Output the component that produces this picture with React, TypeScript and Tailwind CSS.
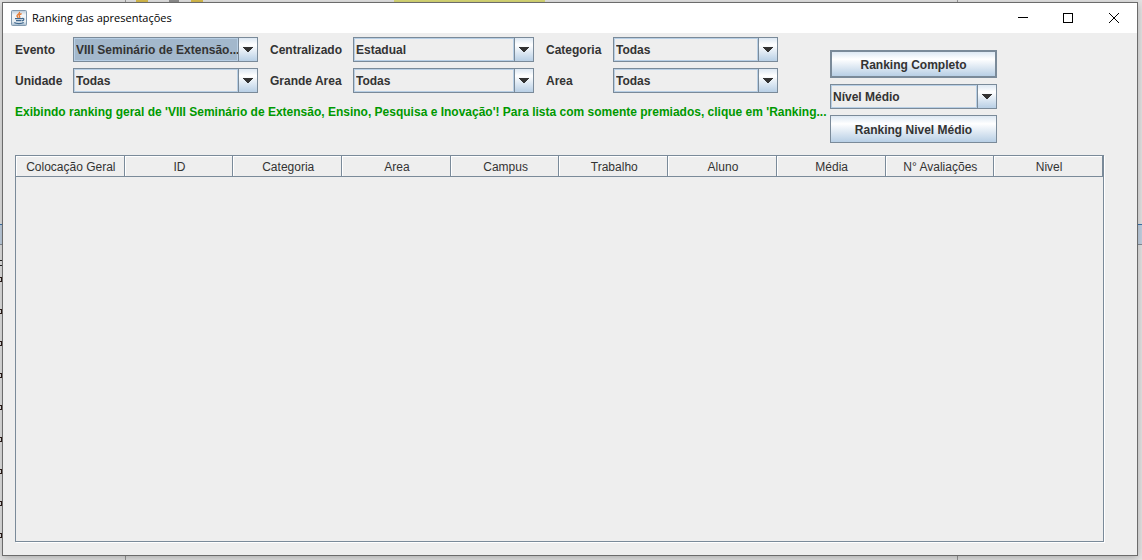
import React, { useId } from 'react';

type ComboProps = { options: string[]; label?: string; name: string; selected?: boolean };

function Combo({ id, options, name, labelled, selected }: { id: string; options: string[]; name: string; labelled: boolean; selected?: boolean }) {
  return (
    <div className="relative flex h-[25px] min-w-0 border border-[#7a8a99] bg-gradient-to-b from-[#dde8f3] via-white via-30% to-[#b8cfe5]">
      <select
        id={id}
        aria-label={labelled ? undefined : name}
        className="relative z-10 w-full min-w-0 appearance-none overflow-hidden rounded-none bg-transparent pl-[2px] text-xs font-bold whitespace-nowrap text-[#333333] outline-none"
      >
        {options.map((o) => (
          <option key={o}>{o}</option>
        ))}
      </select>
      <span
        aria-hidden="true"
        className={
          selected
            ? 'pointer-events-none absolute inset-y-0 left-0 right-[19px] border border-[#b8cfe5] bg-[#a3b8cc]'
            : 'pointer-events-none absolute inset-y-0 left-0 right-[19px] border border-[#b8cfe5] bg-[#eeeeee]'
        }
      />
      <span
        aria-hidden="true"
        className="pointer-events-none absolute inset-y-0 right-0 z-20 flex w-[19px] items-center justify-center border-l border-[#7a8a99] bg-gradient-to-b from-[#dde8f3] via-white via-30% to-[#b8cfe5]"
      >
        <svg width="10" height="5" viewBox="0 0 10 5" shapeRendering="crispEdges" fill="#333333">
          <path d="M0 0h10v1H0zM1 1h8v1H1zM2 2h6v1H2zM3 3h4v1H3zM4 4h2v1H4z" />
        </svg>
      </span>
    </div>
  );
}

function Field({ label, name, options, selected }: ComboProps) {
  const id = useId();
  return (
    <>
      {label && (
        <label htmlFor={id} className="whitespace-nowrap">
          {label}
        </label>
      )}
      <Combo id={id} options={options} name={name} labelled={!!label} selected={selected} />
    </>
  );
}

function JavaIcon() {
  return (
    <svg width="16" height="16" viewBox="0 0 16 16" aria-hidden="true">
      <defs>
        <linearGradient id="tile" x1="0" y1="0" x2="0" y2="1">
          <stop offset="0" stopColor="#b9c8d6" />
          <stop offset="0.3" stopColor="#f4f7f9" />
          <stop offset="0.75" stopColor="#e6edf2" />
          <stop offset="1" stopColor="#9fb6ca" />
        </linearGradient>
      </defs>
      <rect x="0.5" y="0.5" width="15" height="15" rx="1" fill="url(#tile)" stroke="#8199ae" />
      <path d="M8.400 1.800C9.600 3.700 5.200 4.600 6 6.300c.3.700.9 1 1.300 1.500M10.600 3.600C8 4.600 7.500 5.400 8.600 6.400c.5.500.2 1-.3 1.400" fill="none" stroke="#e4762b" strokeWidth="1.300" />
      <path d="M4 8.700h7M11 8.600c2.500-.7 2.500 1.700 0 2.300M5 10.600h5.500M3.300 12.600c1.800 1.300 7.400 1.300 9.400 0" fill="none" stroke="#41698f" strokeWidth="1.200" />
    </svg>
  );
}

function Backdrop() {
  return (
    <div aria-hidden="true" className="absolute inset-0 overflow-hidden bg-[#e4e4e4]">
      <svg className="absolute left-0 top-0 h-full w-full" shapeRendering="crispEdges">
        <path d="M125 0h1v560h-1zM957 0h1v560h-1z" fill="#999999" />
        <path d="M136 0h12v2h-12zM191 0h12v2h-12z" fill="#d9bd4c" />
        <path d="M169 0h10v2h-10z" fill="#909090" />
        <path d="M394 0h151v2H394z" fill="#dada76" />
        <path d="M0 225h1142v20H0z" fill="#c3d2e3" />
        <path d="M0 224h1142v1H0z" fill="#3b74ac" />
        <path d="M0 244h1142v1H0z" fill="#868d97" />
        <path d="M0 260h2v1H0zM0 265h2v1H0z" fill="#222" />
        {[277, 309, 341, 373, 405, 437, 469, 501, 533].map((y) => (
          <path key={y} d={`M0 ${y}h2v1H0zM0 ${y + 4}h2v1H0zM1 ${y + 1}h1v3h-1z`} fill="#2b1a16" />
        ))}
      </svg>
    </div>
  );
}

const columns = ['Colocação Geral', 'ID', 'Categoria', 'Area', 'Campus', 'Trabalho', 'Aluno', 'Média', 'N° Avaliações', 'Nivel'];

export default function App() {
  return (
    <div className="relative flex h-screen flex-col pt-[2px] pr-1 pb-1 pl-[2px] font-['Liberation_Sans',Arial,sans-serif] text-xs text-[#333333]">
      <Backdrop />
      <main className="relative flex min-h-0 flex-1 flex-col border border-[#6b6b6b] bg-[#eeeeee] shadow-[0_2px_8px_rgba(0,0,0,0.25)]">
        <header className="flex h-[30px] shrink-0 items-center bg-white pl-2 text-black">
          <JavaIcon />
          <h1 className="ml-[5px] flex-1 font-['Open_Sans','Noto_Sans',sans-serif] text-[11px]">Ranking das apresentações</h1>
          <button aria-label="Minimizar" className="flex h-full w-11 items-center justify-center">
            <svg width="10" height="10" shapeRendering="crispEdges">
              <path d="M0 4h10v1H0z" />
            </svg>
          </button>
          <button aria-label="Maximizar" className="flex h-full w-[46px] items-center justify-center">
            <svg width="10" height="10" shapeRendering="crispEdges">
              <path d="M0 0h10v10H0zM1 1v8h8V1z" fillRule="evenodd" />
            </svg>
          </button>
          <button aria-label="Fechar" className="flex h-full w-[46px] items-center justify-center">
            <svg width="10" height="10">
              <path d="M0 0l10 10M10 0L0 10" stroke="#000" strokeWidth="1" />
            </svg>
          </button>
        </header>

        <div className="flex min-h-0 flex-1 flex-col pt-1 pr-[33px] pb-[13px] pl-3">
          <section className="flex gap-[52px] font-bold">
            <div>
              <div className="grid grid-cols-[46px_185px_71px_181px_55px_165px] items-center gap-x-3 gap-y-[6px]">
                <Field label="Evento" name="Evento" options={['VIII Seminário de Extensão...']} selected />
                <Field label="Centralizado" name="Centralizado" options={['Estadual']} />
                <Field label="Categoria" name="Categoria" options={['Todas']} />
                <Field label="Unidade" name="Unidade" options={['Todas']} />
                <Field label="Grande Area" name="Grande Area" options={['Todas']} />
                <Field label="Area" name="Area" options={['Todas']} />
              </div>
              <p className="mt-[11px] w-0 leading-4 whitespace-nowrap text-[#009900]">
                Exibindo ranking geral de 'VIII Seminário de Extensão, Ensino, Pesquisa e Inovação'! Para lista com somente premiados, clique em 'Ranking...
              </p>
            </div>
            <div className="mt-[13px] flex w-[167px] shrink-0 flex-col gap-[6px]">
              <button className="h-7 border-2 border-[#7a8a99] bg-gradient-to-b from-[#dde8f3] via-white via-30% to-[#b8cfe5] pt-[2px]">Ranking Completo</button>
              <Field name="Nível" options={['Nível Médio']} />
              <button className="h-7 border border-[#7a8a99] bg-gradient-to-b from-[#dde8f3] via-white via-30% to-[#b8cfe5] pt-[2px]">Ranking Nivel Médio</button>
            </div>
          </section>

          <div className="mt-3 min-h-0 flex-1 border border-[#7a8a99] shadow-[1px_1px_0_#ffffff]">
            <table className="w-full table-fixed border-separate border-spacing-0">
              <thead>
                <tr>
                  {columns.map((c) => (
                    <th
                      key={c}
                      className="h-[21px] border-r border-b border-[#7a8a99] pt-[2px] pr-0 pb-0 pl-[2px] text-center leading-4 font-normal whitespace-nowrap shadow-[inset_1px_1px_0_#ffffff]"
                    >
                      {c}
                    </th>
                  ))}
                </tr>
              </thead>
            </table>
          </div>
        </div>
      </main>
    </div>
  );
}
